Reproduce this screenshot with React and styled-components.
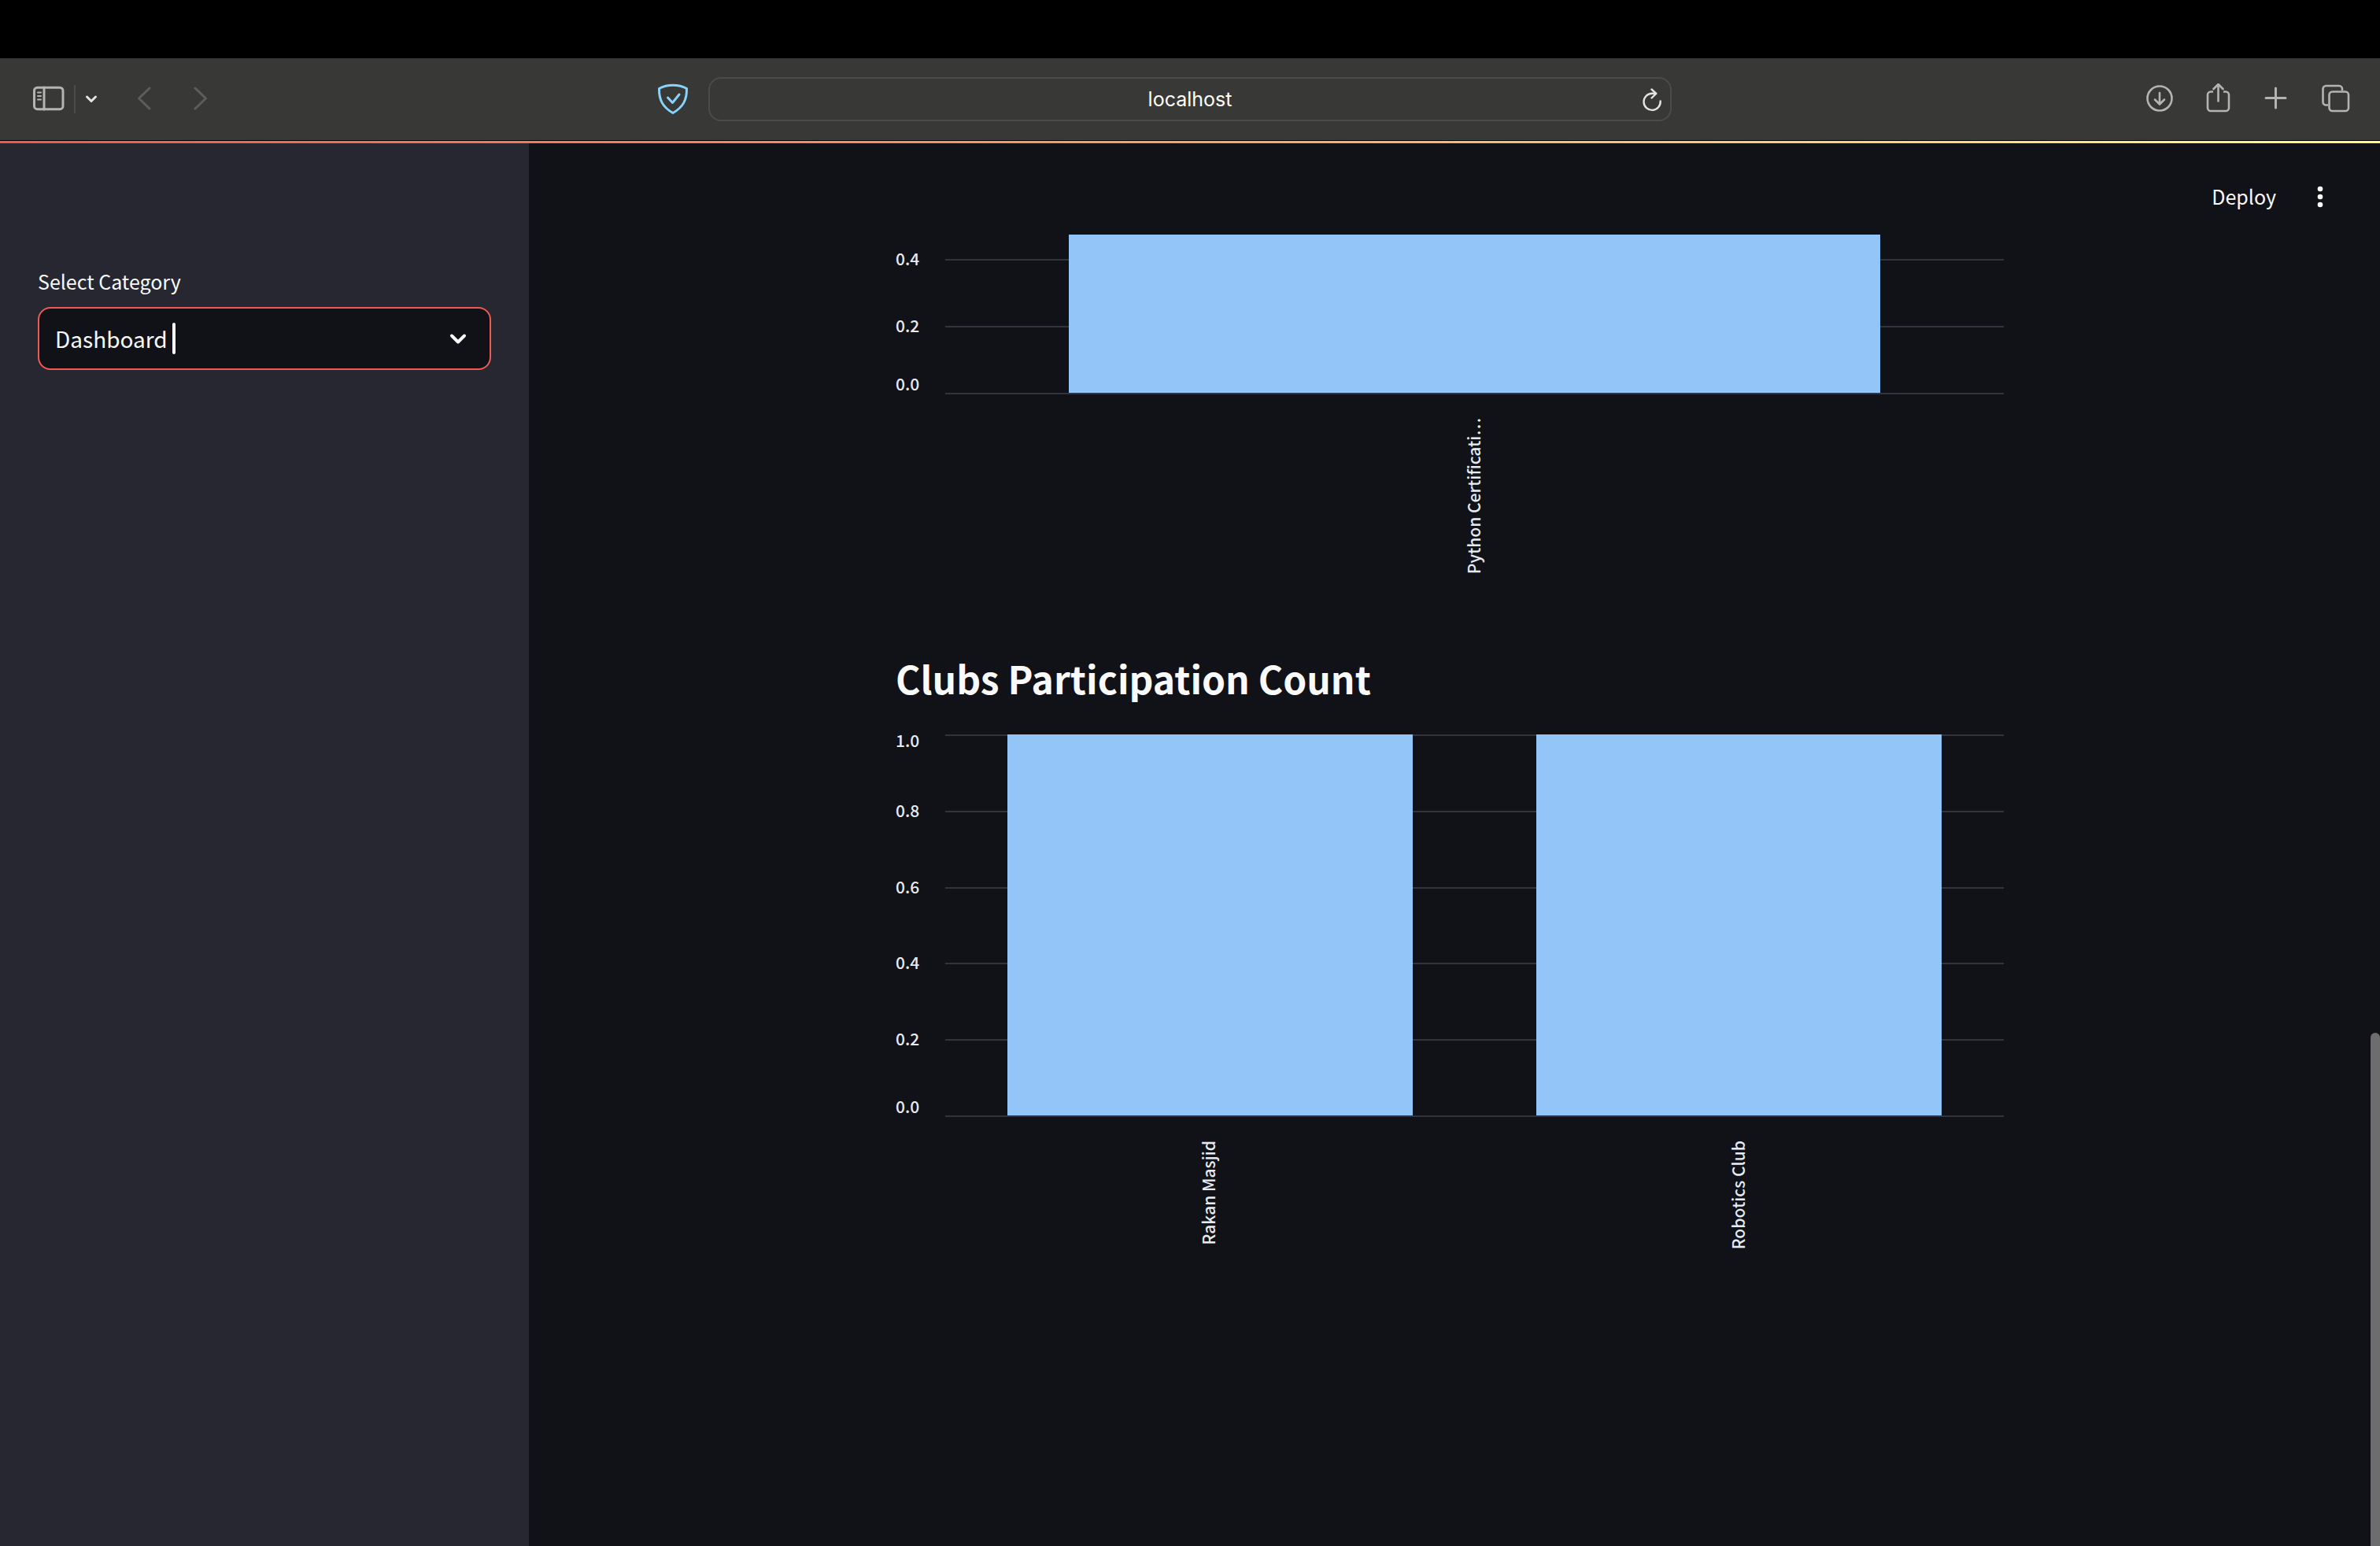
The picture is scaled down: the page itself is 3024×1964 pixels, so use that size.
import React from "react";
import styled, { createGlobalStyle } from "styled-components";

const uiFont = `"Noto Sans CJK SC", "Noto Sans", sans-serif`;

const GlobalStyle = createGlobalStyle`
  *, *::before, *::after { box-sizing: border-box; }
  body {
    margin: 0;
    background: #111217;
    color: #fafafa;
    font-family: ${uiFont};
    font-weight: 400;
  }
  button, input { font: inherit; color: inherit; }
  h2, p { margin: 0; }
`;

const Page = styled.div`
  display: flex;
  flex-direction: column;
  height: 100vh;
  overflow: hidden;
`;

const MenuStrip = styled.div`
  flex: none;
  height: 74px;
  background: #000;
`;

const Toolbar = styled.header`
  flex: none;
  display: grid;
  grid-template-columns: 1fr minmax(0, 1224px) 1fr;
  align-items: center;
  height: 105px;
  border-bottom: 1px solid #000;
  background: #383836;
  color: #b4b4b2;
`;

const ToolGroup = styled.div`
  display: flex;
  align-items: center;
  gap: ${(p) => p.$gap || 0}px;
  padding: ${(p) => p.$pad || "0"};
  ${(p) => p.$end && "justify-content: flex-end;"}
`;

const IconButton = styled.button`
  flex: none;
  display: block;
  height: 40px;
  padding: 0;
  border: 0;
  background: none;
  color: ${(p) => p.$color || "inherit"};
  svg {
    display: block;
    fill: none;
    stroke: currentColor;
    stroke-width: ${(p) => p.$stroke || 3};
    stroke-linecap: round;
    stroke-linejoin: round;
  }
`;

const Separator = styled.span`
  width: 2px;
  height: 36px;
  margin: 0 12px;
  background: #4b4b49;
`;

const NavButtons = styled.div`
  display: flex;
  gap: 52px;
  margin-left: 49px;
  margin-right: auto;
`;

const AddressBar = styled.form`
  display: flex;
  align-items: center;
  height: 56px;
  padding: 0 6px 0 38px;
  border: 2px solid #4b4b49;
  border-radius: 16px;
`;

const AddressInput = styled.input`
  flex: 1;
  min-width: 0;
  border: 0;
  outline: 0;
  padding: 0;
  background: none;
  color: #fff;
  font-family: Inter, Roboto, sans-serif;
  font-size: 25px;
  line-height: 32px;
  text-align: center;
`;

const Decoration = styled.div`
  flex: none;
  height: 3px;
  background: linear-gradient(90deg, #ec5a50, #faa268 50%, #fffa88);
`;

const Workspace = styled.div`
  flex: 1;
  min-height: 0;
  display: flex;
`;

const Sidebar = styled.aside`
  flex: none;
  width: 672px;
  padding: 156px 48px 0;
  background: #262730;
`;

const FieldLabel = styled.label`
  display: block;
  margin-bottom: 14px;
  font-size: 25px;
  line-height: 38px;
`;

const Combo = styled.div`
  display: flex;
  align-items: center;
  height: 80px;
  padding: 0 20px;
  border: 2px solid #f05a54;
  border-radius: 16px;
  background: #111217;
`;

const ComboInput = styled.input`
  field-sizing: content;
  border: 0;
  outline: 0;
  padding: 0;
  background: none;
  caret-color: transparent;
  font-size: 28px;
  line-height: 40px;
`;

const Caret = styled.span`
  width: 4px;
  height: 40px;
  margin-left: 6px;
  margin-right: auto;
  border-radius: 2px;
  background: #fafafa;
`;

const Main = styled.main`
  flex: 1;
  min-width: 0;
  display: flex;
  flex-direction: column;
`;

const AppHeader = styled.div`
  flex: none;
  display: flex;
  align-items: center;
  justify-content: flex-end;
  gap: 36px;
  height: 116px;
  padding: 20px 56px 0 0;
`;

const DeployButton = styled.button`
  padding: 0 0 2px;
  border: 0;
  background: none;
  font-size: 25px;
  line-height: 38px;
`;

const DotsButton = styled(IconButton)`
  svg { fill: currentColor; stroke: none; }
`;

const ScrollArea = styled.div`
  flex: 1;
  min-height: 0;
  display: flex;
`;

const Content = styled.div`
  flex: 1;
  min-width: 0;
`;

const Column = styled.div`
  max-width: 1408px;
  margin: 0 auto;
`;

const ScrollTrack = styled.div`
  flex: none;
  display: flex;
  align-items: flex-end;
  width: 12px;
`;

const ScrollThumb = styled.div`
  width: 12px;
  height: 652px;
  border-radius: 6px 6px 0 0;
  background: #6d6d70;
`;

const Heading = styled.h2`
  padding: 2px 0 42px;
  font-size: 48px;
  line-height: 60px;
  font-weight: 700;
`;

const ChartGrid = styled.div`
  display: grid;
  grid-template-columns: 63px minmax(0, 1fr);
  grid-template-rows: ${(p) => p.$height}px ${(p) => p.$labelSpace}px;
  color: #e6eaf1;
  font-size: 21px;
  font-weight: 500;
`;

const Ticks = styled.div`
  display: flex;
  flex-direction: column;
  justify-content: space-between;
  margin-top: -2px;
  padding-top: ${(p) => p.$inset}px;
  padding-bottom: 2px;
`;

const alignments = { start: "flex-start", middle: "center", end: "flex-end" };

const TickLabel = styled.div`
  display: flex;
  align-items: ${(p) => alignments[p.$at]};
  height: 2px;
  line-height: ${(p) => (p.$at === "end" ? 24 : 18)}px;
`;

const Plot = styled.div`
  display: grid;
  > * { grid-area: 1 / 1; }
`;

const Lines = styled.div`
  display: flex;
  flex-direction: column;
  justify-content: space-between;
  padding-top: ${(p) => p.$inset}px;
`;

const Line = styled.div`
  height: 2px;
  background: #31333f;
`;

const Bars = styled.div`
  display: flex;
  justify-content: space-around;
  padding-bottom: 2px;
`;

const Bar = styled.div`
  width: ${(p) => p.$share}%;
  background: #93c5f9;
`;

const Categories = styled.div`
  grid-column: 2;
  display: flex;
  padding-top: 30px;
`;

const Category = styled.div`
  flex: 1;
  display: flex;
  justify-content: center;
  align-items: flex-start;
  padding-right: 4px;
  span {
    writing-mode: vertical-rl;
    text-orientation: sideways;
    transform: rotate(180deg);
    line-height: 28px;
    white-space: nowrap;
  }
`;

function BarChart({ ticks, categories, height, labelSpace, inset = 0 }) {
  const place = (i) => {
    if (i === ticks.length - 1) return "end";
    return i === 0 && inset === 0 ? "start" : "middle";
  };
  return (
    <ChartGrid $height={height} $labelSpace={labelSpace}>
      <Ticks $inset={inset}>
        {ticks.map((t, i) => (
          <TickLabel key={t} $at={place(i)}>{t}</TickLabel>
        ))}
      </Ticks>
      <Plot>
        <Lines $inset={inset}>
          {ticks.map((t) => <Line key={t} />)}
        </Lines>
        <Bars>
          {categories.map((c) => <Bar key={c} $share={76.6 / categories.length} />)}
        </Bars>
      </Plot>
      <Categories>
        {categories.map((c) => <Category key={c}><span>{c}</span></Category>)}
      </Categories>
    </ChartGrid>
  );
}

export default function App() {
  return (
    <Page>
      <GlobalStyle />
      <MenuStrip />
      <Toolbar>
        <ToolGroup $pad="0 25px 0 42px">
          <IconButton type="button" aria-label="Show sidebar">
            <svg width="40" height="40" viewBox="0 0 40 40">
              <rect x="1.5" y="5.2" width="36.5" height="27.5" rx="4" />
              <path d="M14 5v28" />
              <path d="M6 11.6h4M6 16h4M6 20.4h4" strokeWidth="2" />
            </svg>
          </IconButton>
          <Separator />
          <IconButton type="button" aria-label="Tab groups" $color="#e4e4e2">
            <svg width="16" height="40" viewBox="0 0 16 40">
              <path d="M2.5 17l5.5 5.5 5.5-5.5" />
            </svg>
          </IconButton>
          <NavButtons>
            <IconButton type="button" aria-label="Back" $color="#5d5d5b">
              <svg width="20" height="40" viewBox="0 0 20 40">
                <path d="M17 6L3.5 19 17 32" />
              </svg>
            </IconButton>
            <IconButton type="button" aria-label="Forward" $color="#5d5d5b">
              <svg width="20" height="40" viewBox="0 0 20 40">
                <path d="M3 6l13.5 13L3 32" />
              </svg>
            </IconButton>
          </NavButtons>
          <IconButton type="button" aria-label="Privacy shield" $color="#86d3fb">
            <svg width="40" height="40" viewBox="0 0 40 40">
              <path d="M2.5 6.5C8 3.5 14 2.3 20 2.3s12 1.2 17.5 4.2C37.8 21 33 30 20 37.5 7 30 2.2 21 2.5 6.5z" />
              <path d="M13.5 18l6 6.500 8.500-10.500" />
            </svg>
          </IconButton>
        </ToolGroup>
        <AddressBar>
          <AddressInput aria-label="Address" defaultValue="localhost" />
          <IconButton type="button" aria-label="Reload" $color="#e4e4e2" $stroke={2.4}>
            <svg width="32" height="40" viewBox="0 0 32 40">
              <path d="M25.7 22.5A10.6 10.6 0 1 1 15 12.7h5" />
              <path d="M14.5 7.5l5.8 5.4-5.8 5.6" />
            </svg>
          </IconButton>
        </AddressBar>
        <ToolGroup $gap={34} $pad="0 38px 0 0" $end>
          <IconButton type="button" aria-label="Downloads" $stroke={2.6}>
            <svg width="40" height="40" viewBox="0 0 40 40">
              <circle cx="20" cy="19" r="15.5" />
              <path d="M20 12v14M14 20.5l6 6 6-6" />
            </svg>
          </IconButton>
          <IconButton type="button" aria-label="Share" $stroke={2.6}>
            <svg width="40" height="40" viewBox="0 0 40 40">
              <path d="M14 10.5H11a4 4 0 0 0-4 4V31a4 4 0 0 0 4 4h19a4 4 0 0 0 4-4V14.5a4 4 0 0 0-4-4h-3" strokeLinecap="butt" />
              <path d="M20.5 22.5V1.5M14.5 7l6-6 6 6" />
            </svg>
          </IconButton>
          <IconButton type="button" aria-label="New tab">
            <svg width="40" height="40" viewBox="0 0 40 40">
              <path d="M19.5 6v25M7 18.5h25" />
            </svg>
          </IconButton>
          <IconButton type="button" aria-label="Tab overview" $stroke={2.6}>
            <svg width="40" height="40" viewBox="0 0 40 40">
              <rect x="13.5" y="10.5" width="24.5" height="24.5" rx="4" />
              <path d="M12 27.5H9.5a4 4 0 0 1-4-4V7a4 4 0 0 1 4-4h16.5a4 4 0 0 1 4 4v2" strokeLinecap="butt" />
            </svg>
          </IconButton>
        </ToolGroup>
      </Toolbar>
      <Decoration />
      <Workspace>
        <Sidebar>
          <FieldLabel htmlFor="category">Select Category</FieldLabel>
          <Combo>
            <ComboInput id="category" role="combobox" aria-expanded="false" defaultValue="Dashboard" />
            <Caret />
            <IconButton type="button" aria-label="Open options" $stroke={4}>
              <svg width="40" height="40" viewBox="0 0 40 40">
                <path d="M12 16.5l8 8 8-8" />
              </svg>
            </IconButton>
          </Combo>
        </Sidebar>
        <Main>
          <AppHeader>
            <DeployButton type="button">Deploy</DeployButton>
            <DotsButton type="button" aria-label="Main menu">
              <svg width="40" height="40" viewBox="0 0 40 40">
                <circle cx="20" cy="10" r="3.3" />
                <circle cx="20" cy="20" r="3.3" />
                <circle cx="20" cy="30" r="3.3" />
              </svg>
            </DotsButton>
          </AppHeader>
          <ScrollArea>
            <Content>
              <Column>
                <BarChart
                  ticks={["0.4", "0.2", "0.0"]}
                  categories={["Python Certificati…"]}
                  height={203}
                  labelSpace={328}
                  inset={31}
                />
                <Heading>Clubs Participation Count</Heading>
                <BarChart
                  ticks={["1.0", "0.8", "0.6", "0.4", "0.2", "0.0"]}
                  categories={["Rakan Masjid", "Robotics Club"]}
                  height={486}
                  labelSpace={328}
                />
              </Column>
            </Content>
            <ScrollTrack>
              <ScrollThumb />
            </ScrollTrack>
          </ScrollArea>
        </Main>
      </Workspace>
    </Page>
  );
}
